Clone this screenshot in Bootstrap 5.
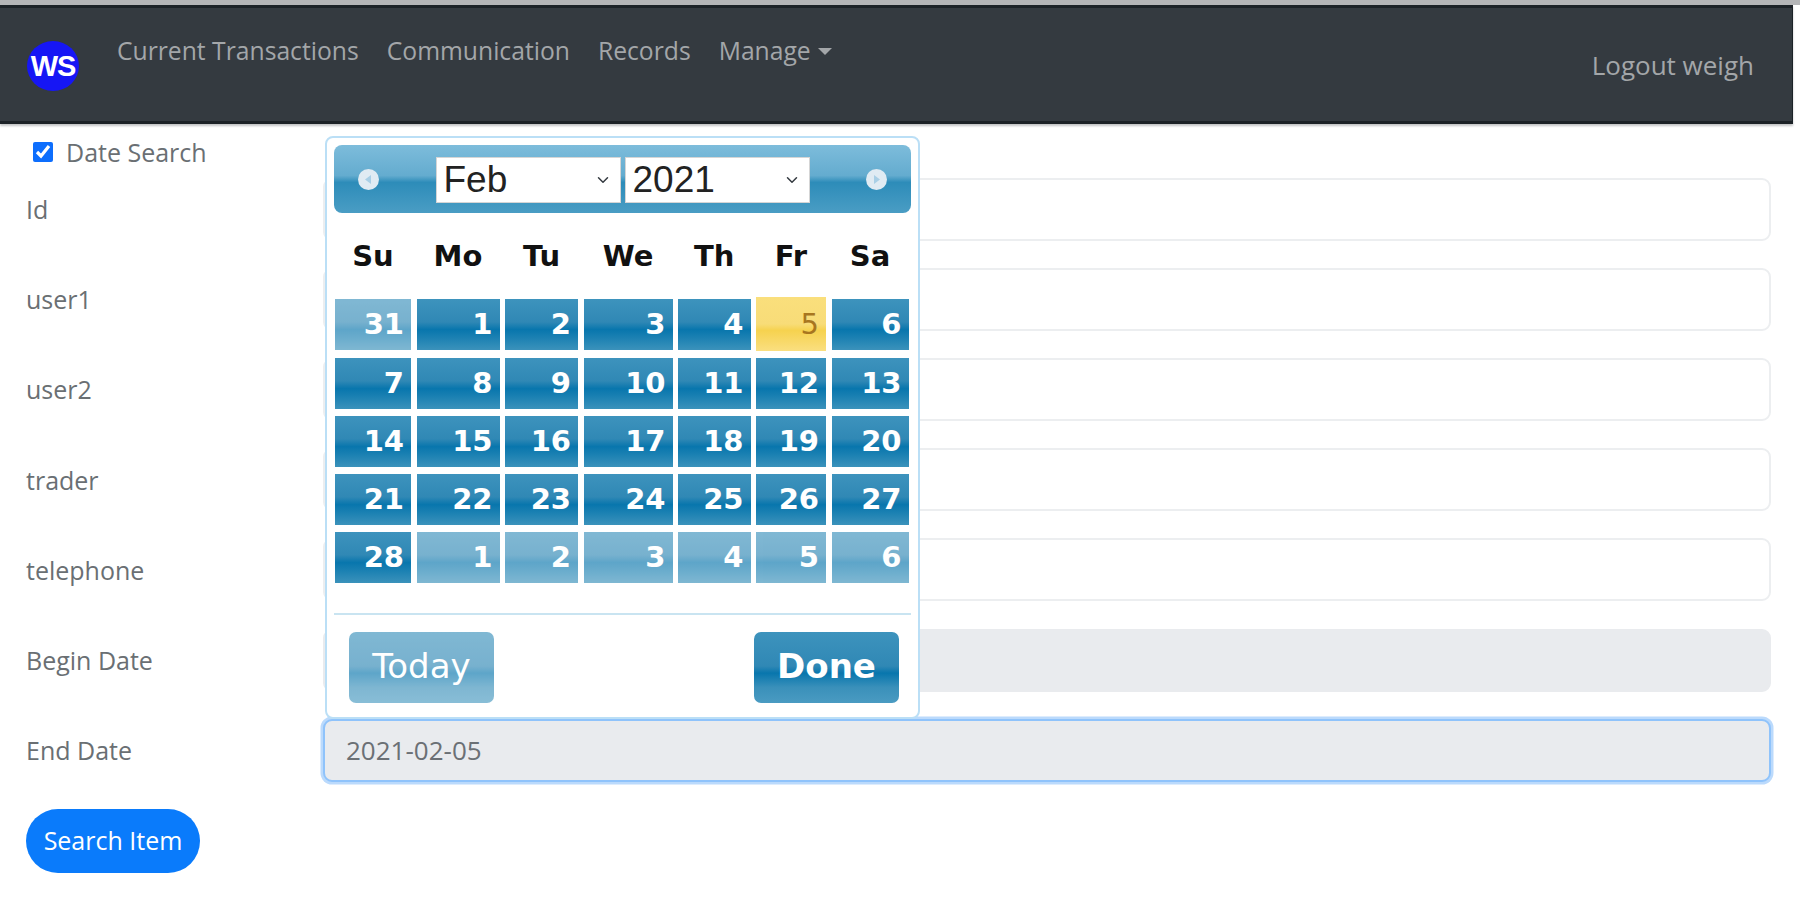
<!doctype html>
<html lang="en">
<head>
<meta charset="utf-8">
<title>Search</title>
<link rel="stylesheet" href="https://cdn.jsdelivr.net/npm/bootstrap@5.3.0/dist/css/bootstrap.min.css">
<style>
html,body{height:100%;overflow:hidden}
body{background:#fff;font-family:"Open Sans","Noto Sans",sans-serif;color:#6a6f73;font-size:25px;position:relative}
.topstrip{height:5px;background:#b4b5b7}
.wsbar{height:119px;width:1793px;background:#343a40;border:solid #1c2227;border-width:3px 1px 3px 0;box-shadow:0 2px 2px #c4c5c6;padding:0 38px 0 27px;align-items:flex-start}
.wslogo{width:52px;height:50px;border-radius:50%;background:#1616f5;color:#fff;font:700 29px/50px "Liberation Sans",sans-serif;text-align:center;margin-top:33px;letter-spacing:-1px}
.wsmenu{margin:26px 0 0 38px;gap:28px}
.wslink{color:#a3a6a9;text-decoration:none;font-size:24.7px;line-height:34px;white-space:nowrap}
.wslink.dropdown-toggle::after{vertical-align:.2em;margin-left:.3em}
.wslink.wslogout{margin:40px 0 0 auto;font-size:26px}
.wsform{padding:0 29px 0 26px;height:770px}
.datecheck{height:42px;padding:10px 0 0 7px;margin:0}
.datecheck input{width:20px;height:20px;margin:8px 13px 0 0;accent-color:#0d6efd}
.wsrow{height:90.1px;margin:0}
.wsrow label{width:297px;flex:none;margin:0;padding-bottom:2px}
.wsfield{flex:1;height:63px;border:2px solid #eceef0;border-radius:9px;background:#fff;font-size:26px;color:#6b7075;padding:0 21px;margin-top:-3px}
.wsfield[readonly]{background:#e9ebee;border-color:#e9ebee}
.wsfield.isfocus,.wsfield.isfocus:focus{border-color:#8fc3fb;box-shadow:0 0 0 2.5px #bbdafc;outline:0}
.searchbtn{width:174px;height:64px;border-radius:32px;background:#0a7bfb;color:#fff;border:0;font-size:25px;padding:0;margin-top:12px}
.dpick{position:absolute;left:325px;top:136px;width:595px;height:583px;border:2px solid #bbdff6;border-radius:8px;background:#fff;padding:7px 7px 0;z-index:5}
.dphead{height:68px;border-radius:8px;background:linear-gradient(#7dbcdb 0,#64accf 45%,#2d8cb9 55%,#4a9dc4 100%);padding:0 24px 0 24px}
.dpnav{width:21px;height:21px;flex:none}
.dphead .form-select{height:46px;width:185px;flex:none;border:1px solid #d5d5d5;border-radius:0;background-color:#fff;background-position:right 9px center;background-size:16px 12px;font:37px/44px "Liberation Sans",sans-serif;color:#222;padding:0 0 0 7px;margin-top:1px}
.dpdays{display:grid;grid-template-columns:76px 83px 73px 89px 72.5px 70px 77px;column-gap:5.5px;row-gap:7px;margin-left:1px}
.dpwk{font:700 29px/87px "DejaVu Sans",sans-serif;color:#111;text-align:center;height:79px}
.dpday{height:51px;color:#fff;font:700 29px/51px "DejaVu Sans",sans-serif;text-align:right;padding-right:7px;background:linear-gradient(#3d93bd 0,#3088b5 45%,#0876ad 60%,#1a80b2 75%,#3b92bb 100%)}
.dpday.muted{opacity:.65}
.dpday.today{background:linear-gradient(#fadf7c 0,#f8dc78 50%,#f6d24f 62%,#fadf80 100%);color:#a8761f;font-weight:400;height:54px;margin-top:-2px;line-height:55px}
.dpfoot{border-top:2px solid #c9e4f1;margin-top:30px;padding:17px 12px 0 15px}
.dpbtn{width:145px;height:71px;border:0;border-radius:7px;color:#fff;font:400 34px "DejaVu Sans",sans-serif;background:linear-gradient(#3d93bd 0,#3088b5 48%,#0876ad 58%,#3a90ba 78%,#4a9bc2 100%);padding:0 0 3px}
.dpbtn.bold{font-weight:700}
.dpbtn.dim{opacity:.65}
</style>
</head>
<body>
<div class="topstrip"></div>
<nav class="wsbar d-flex">
  <div class="wslogo">WS</div>
  <div class="wsmenu d-flex">
    <a class="wslink" href="#">Current Transactions</a>
    <a class="wslink" href="#">Communication</a>
    <a class="wslink" href="#">Records</a>
    <a class="wslink dropdown-toggle" href="#">Manage</a>
  </div>
  <a class="wslink wslogout" href="#">Logout weigh</a>
</nav>
<form class="wsform">
  <label class="datecheck d-flex"><input type="checkbox" checked>Date Search</label>
  <div class="wsrow d-flex align-items-center"><label>Id</label><input class="wsfield"></div>
  <div class="wsrow d-flex align-items-center"><label>user1</label><input class="wsfield"></div>
  <div class="wsrow d-flex align-items-center"><label>user2</label><input class="wsfield"></div>
  <div class="wsrow d-flex align-items-center"><label>trader</label><input class="wsfield"></div>
  <div class="wsrow d-flex align-items-center"><label>telephone</label><input class="wsfield"></div>
  <div class="wsrow d-flex align-items-center"><label>Begin Date</label><input class="wsfield" readonly></div>
  <div class="wsrow d-flex align-items-center"><label>End Date</label><input class="wsfield isfocus" readonly value="2021-02-05"></div>
  <button type="button" class="searchbtn">Search Item</button>
</form>
<div class="dpick">
  <div class="dphead d-flex align-items-center">
    <svg class="dpnav" viewBox="0 0 21 21"><circle cx="10.500" cy="10.500" r="10.500" fill="#e0ebf3"/><path d="M13 6v9l-6-4.500z" fill="#a9cfe6"/></svg>
    <div class="d-flex flex-grow-1 justify-content-center">
      <select class="form-select"><option>Feb</option></select><select class="form-select ms-1"><option>2021</option></select>
    </div>
    <svg class="dpnav" viewBox="0 0 21 21"><circle cx="10.500" cy="10.500" r="10.500" fill="#e0ebf3"/><path d="M8 6v9l6-4.500z" fill="#a9cfe6"/></svg>
  </div>
  <div class="dpdays">
    <div class="dpwk">Su</div><div class="dpwk">Mo</div><div class="dpwk">Tu</div><div class="dpwk">We</div><div class="dpwk">Th</div><div class="dpwk">Fr</div><div class="dpwk">Sa</div>
    <div class="dpday muted">31</div><div class="dpday">1</div><div class="dpday">2</div><div class="dpday">3</div><div class="dpday">4</div><div class="dpday today">5</div><div class="dpday">6</div>
    <div class="dpday">7</div><div class="dpday">8</div><div class="dpday">9</div><div class="dpday">10</div><div class="dpday">11</div><div class="dpday">12</div><div class="dpday">13</div>
    <div class="dpday">14</div><div class="dpday">15</div><div class="dpday">16</div><div class="dpday">17</div><div class="dpday">18</div><div class="dpday">19</div><div class="dpday">20</div>
    <div class="dpday">21</div><div class="dpday">22</div><div class="dpday">23</div><div class="dpday">24</div><div class="dpday">25</div><div class="dpday">26</div><div class="dpday">27</div>
    <div class="dpday">28</div><div class="dpday muted">1</div><div class="dpday muted">2</div><div class="dpday muted">3</div><div class="dpday muted">4</div><div class="dpday muted">5</div><div class="dpday muted">6</div>
  </div>
  <div class="dpfoot d-flex justify-content-between">
    <button type="button" class="dpbtn dim">Today</button>
    <button type="button" class="dpbtn bold">Done</button>
  </div>
</div>
<script src="https://cdn.jsdelivr.net/npm/bootstrap@5.3.0/dist/js/bootstrap.bundle.min.js"></script>
</body>
</html>
